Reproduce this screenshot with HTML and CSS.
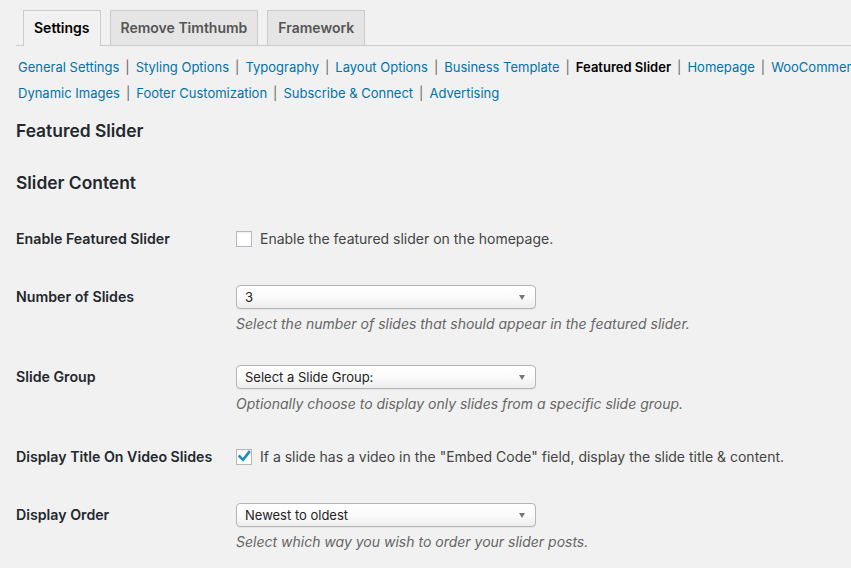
FILE: index.html
```
<!DOCTYPE html>
<html lang="en">
<head>
<meta charset="utf-8">
<title>Featured Slider Settings</title>
<link rel="stylesheet" href="styles.css">
</head>
<body>
<div class="wrap">
  <nav class="tabs">
    <a class="tab tab-active" href="#">Settings</a>
    <a class="tab" href="#">Remove Timthumb</a>
    <a class="tab" href="#">Framework</a>
  </nav>

  <ul class="subnav">
    <li><a href="#">General Settings</a><span class="sep">|</span></li>
    <li><a href="#">Styling Options</a><span class="sep">|</span></li>
    <li><a href="#">Typography</a><span class="sep">|</span></li>
    <li><a href="#">Layout Options</a><span class="sep">|</span></li>
    <li><a href="#">Business Template</a><span class="sep">|</span></li>
    <li><a class="current" href="#">Featured Slider</a><span class="sep">|</span></li>
    <li><a href="#">Homepage</a><span class="sep">|</span></li>
    <li class="clip"><a href="#">WooCommerce</a><span class="sep">|</span></li>
    <li><a href="#">Dynamic Images</a><span class="sep">|</span></li>
    <li><a href="#">Footer Customization</a><span class="sep">|</span></li>
    <li><a href="#">Subscribe &amp; Connect</a><span class="sep">|</span></li>
    <li><a href="#">Advertising</a></li>
  </ul>

  <h2 class="page-title">Featured Slider</h2>
  <h3 class="section-title">Slider Content</h3>

  <div class="form">
    <div class="row">
      <div class="row-label">Enable Featured Slider</div>
      <div class="row-field field-check">
        <label class="check"><span class="box"></span>Enable the featured slider on the homepage.</label>
      </div>
    </div>

    <div class="row">
      <div class="row-label">Number of Slides</div>
      <div class="row-field field-select">
        <div class="select-wrap">
          <select class="select"><option>3</option></select>
        </div>
        <p class="desc">Select the number of slides that should appear in the featured slider.</p>
      </div>
    </div>

    <div class="row">
      <div class="row-label">Slide Group</div>
      <div class="row-field field-select">
        <div class="select-wrap">
          <select class="select"><option>Select a Slide Group:</option></select>
        </div>
        <p class="desc">Optionally choose to display only slides from a specific slide group.</p>
      </div>
    </div>

    <div class="row">
      <div class="row-label">Display Title On Video Slides</div>
      <div class="row-field field-check">
        <label class="check"><span class="box"><svg class="tick" viewBox="0 0 16 16" width="16" height="16"><path d="M3.6 7.4 L7 10.8 L13 3.2" fill="none" stroke="#1e8cbe" stroke-width="2.6" stroke-linecap="square" stroke-linejoin="miter"/></svg></span>If a slide has a video in the "Embed Code" field, display the slide title &amp; content.</label>
      </div>
    </div>

    <div class="row">
      <div class="row-label">Display Order</div>
      <div class="row-field field-select">
        <div class="select-wrap">
          <select class="select"><option>Newest to oldest</option></select>
        </div>
        <p class="desc">Select which way you wish to order your slider posts.</p>
      </div>
    </div>
  </div>
</div>
</body>
</html>
```

FILE: styles.css
```
html, body {
  margin: 0;
  padding: 0;
  background: #f1f1f1;
}

body {
  font-family: Inter, "Noto Sans", "Liberation Sans", sans-serif;
  color: #23282d;
  font-size: 14px;
  overflow: hidden;
  width: 851px;
  height: 568px;
}

.wrap {
  padding-left: 16px;
}

.tabs {
  display: flex;
  gap: 9px;
  padding: 10px 0 0 7px;
  border-bottom: 1px solid #ccc;
  height: 35px;
  box-sizing: content-box;
  white-space: nowrap;
}

.tab {
  display: block;
  height: 34px;
  box-sizing: content-box;
  padding: 0 10px;
  border: 1px solid #ccc;
  border-bottom: none;
  background: #e5e5e5;
  color: #555;
  font-size: 14px;
  font-weight: 600;
  line-height: 34px;
  text-decoration: none;
}

.tab-active {
  background: #f1f1f1;
  color: #000;
  height: 35px;
  margin-bottom: -1px;
}

.subnav {
  list-style: none;
  margin: 8px 0 0 0;
  padding: 0 0 0 2px;
  display: flex;
  flex-wrap: wrap;
  width: 900px;
  font-size: 13px;
  line-height: 26px;
  white-space: nowrap;
}

.subnav li {
  display: block;
}

.subnav a {
  color: #0073aa;
  text-decoration: none;
}

.subnav a.current {
  color: #000;
  font-weight: 600;
}

.sep {
  color: #666;
  padding: 0 6px;
}

.subnav li.clip {
  width: 90px;
  overflow: hidden;
}

.page-title {
  margin: 14px 0 0 0;
  font-size: 17.4px;
  font-weight: 600;
  line-height: 22px;
  color: #23282d;
}

.section-title {
  margin: 30px 0 0 0;
  font-size: 17.4px;
  font-weight: 600;
  line-height: 22px;
  color: #23282d;
}

.form {
  margin-top: 16px;
}

.row {
  display: flex;
}

.row-label {
  width: 220px;
  flex: none;
  padding: 20px 0;
  font-size: 14.2px;
  font-weight: 600;
  line-height: 18px;
  color: #23282d;
}

.field-check {
  padding: 20px 0;
}

.check {
  display: flex;
  align-items: center;
  gap: 8px;
  font-size: 14px;
  line-height: 18px;
  color: #444;
  white-space: nowrap;
}

.box {
  display: block;
  width: 16px;
  height: 16px;
  box-sizing: border-box;
  border: 1px solid #b4b9be;
  background: #fff;
  box-shadow: inset 0 1px 2px rgba(0, 0, 0, 0.07);
  position: relative;
}

.tick {
  position: absolute;
  left: -1px;
  top: -1px;
}

.field-select {
  padding: 17px 0 15px 0;
}

.select-wrap {
  position: relative;
  width: 300px;
  height: 24px;
}

.select-wrap::after {
  content: "";
  position: absolute;
  right: 11px;
  top: 10px;
  border-left: 3.5px solid transparent;
  border-right: 3.5px solid transparent;
  border-top: 5px solid #777;
  pointer-events: none;
}

.select {
  appearance: none;
  -webkit-appearance: none;
  display: block;
  width: 300px;
  height: 24px;
  margin: 0;
  padding: 0 20px 0 8px;
  box-sizing: border-box;
  border: 1px solid #b5b5b5;
  border-radius: 4px;
  background: linear-gradient(#ffffff 0%, #fbfbfb 50%, #ededed 100%);
  box-shadow: 0 1px 1px rgba(0, 0, 0, 0.06);
  font-family: Inter, "Noto Sans", "Liberation Sans", sans-serif;
  font-size: 13px;
  line-height: 22px;
  color: #222;
}

.desc {
  margin: 6px 0 0 0;
  font-size: 14px;
  font-style: italic;
  line-height: 18px;
  color: #666;
  white-space: nowrap;
}
```
